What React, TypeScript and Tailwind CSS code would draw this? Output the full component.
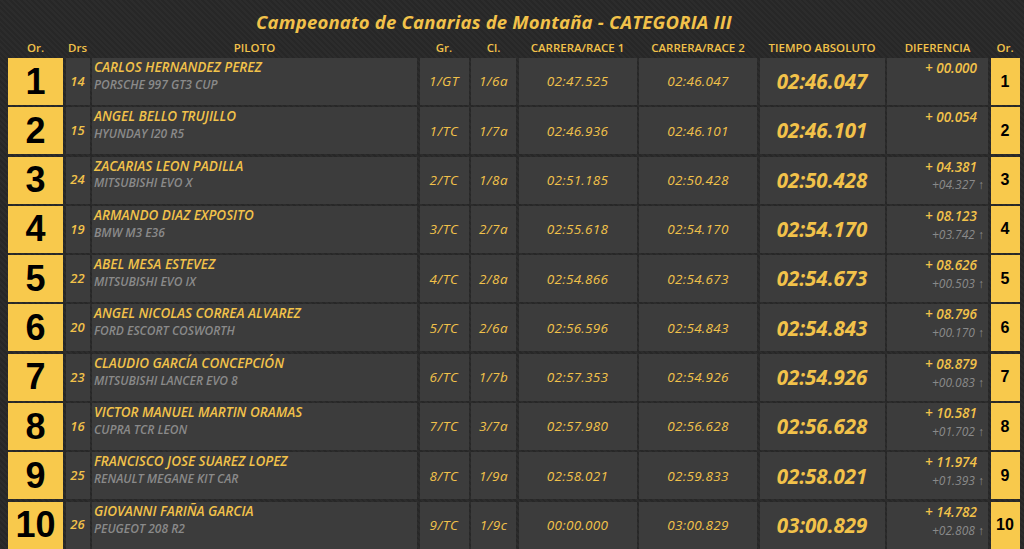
import React from "react";

type Row = {
  pos: number;
  drs: string;
  name: string;
  car: string;
  gr: string;
  cl: string;
  r1: string;
  r2: string;
  abs: string;
  diff: string;
  diff2: string;
};

const rows: Row[] = [
  { pos: 1, drs: "14", name: "CARLOS HERNANDEZ PEREZ", car: "PORSCHE 997 GT3 CUP", gr: "1/GT", cl: "1/6a", r1: "02:47.525", r2: "02:46.047", abs: "02:46.047", diff: "+ 00.000", diff2: "" },
  { pos: 2, drs: "15", name: "ANGEL BELLO TRUJILLO", car: "HYUNDAY I20 R5", gr: "1/TC", cl: "1/7a", r1: "02:46.936", r2: "02:46.101", abs: "02:46.101", diff: "+ 00.054", diff2: "" },
  { pos: 3, drs: "24", name: "ZACARIAS LEON PADILLA", car: "MITSUBISHI EVO X", gr: "2/TC", cl: "1/8a", r1: "02:51.185", r2: "02:50.428", abs: "02:50.428", diff: "+ 04.381", diff2: "+04.327" },
  { pos: 4, drs: "19", name: "ARMANDO DIAZ EXPOSITO", car: "BMW M3 E36", gr: "3/TC", cl: "2/7a", r1: "02:55.618", r2: "02:54.170", abs: "02:54.170", diff: "+ 08.123", diff2: "+03.742" },
  { pos: 5, drs: "22", name: "ABEL MESA ESTEVEZ", car: "MITSUBISHI EVO IX", gr: "4/TC", cl: "2/8a", r1: "02:54.866", r2: "02:54.673", abs: "02:54.673", diff: "+ 08.626", diff2: "+00.503" },
  { pos: 6, drs: "20", name: "ANGEL NICOLAS CORREA ALVAREZ", car: "FORD ESCORT COSWORTH", gr: "5/TC", cl: "2/6a", r1: "02:56.596", r2: "02:54.843", abs: "02:54.843", diff: "+ 08.796", diff2: "+00.170" },
  { pos: 7, drs: "23", name: "CLAUDIO GARCÍA CONCEPCIÓN", car: "MITSUBISHI LANCER EVO 8", gr: "6/TC", cl: "1/7b", r1: "02:57.353", r2: "02:54.926", abs: "02:54.926", diff: "+ 08.879", diff2: "+00.083" },
  { pos: 8, drs: "16", name: "VICTOR MANUEL MARTIN ORAMAS", car: "CUPRA TCR LEON", gr: "7/TC", cl: "3/7a", r1: "02:57.980", r2: "02:56.628", abs: "02:56.628", diff: "+ 10.581", diff2: "+01.702" },
  { pos: 9, drs: "25", name: "FRANCISCO JOSE SUAREZ LOPEZ", car: "RENAULT MEGANE KIT CAR", gr: "8/TC", cl: "1/9a", r1: "02:58.021", r2: "02:59.833", abs: "02:58.021", diff: "+ 11.974", diff2: "+01.393" },
  { pos: 10, drs: "26", name: "GIOVANNI FARIÑA GARCIA", car: "PEUGEOT 208 R2", gr: "9/TC", cl: "1/9c", r1: "00:00.000", r2: "03:00.829", abs: "03:00.829", diff: "+ 14.782", diff2: "+02.808" },
];

const grid =
  "grid grid-cols-[55px_24px_325px_49px_45px_118px_118px_125px_101px_29px] gap-x-[2.5px]";
const cell = "bg-[#3c3c3c]";
const font = { fontFamily: '"Open Sans", "Noto Sans", sans-serif' };

export default function App() {
  return (
    <div
      className="w-[1024px] h-[549px] overflow-hidden bg-[#2a2a2a] bg-[repeating-linear-gradient(45deg,#2c2c2c_0px,#2c2c2c_2px,#272727_2px,#272727_4px)] text-[#f2c24a]"
      style={font}
    >
      <div className="h-[38px] flex items-center justify-center pr-[36px] pt-[6px]">
        <h1 className="text-[18.5px] font-bold italic tracking-[0.2px]">
          Campeonato de Canarias de Montaña - CATEGORIA III
        </h1>
      </div>
      <div className={`${grid} pl-[8px] h-[20px] items-center text-[11.5px] font-semibold text-center`}>
        <div>Or.</div>
        <div>Drs</div>
        <div>PILOTO</div>
        <div>Gr.</div>
        <div>Cl.</div>
        <div>CARRERA/RACE 1</div>
        <div>CARRERA/RACE 2</div>
        <div>TIEMPO ABSOLUTO</div>
        <div>DIFERENCIA</div>
        <div>Or.</div>
      </div>
      <div className="flex flex-col gap-y-[2.3px] pl-[8px]">
        {rows.map((r) => (
          <div key={r.pos} className={`${grid} h-[47px]`}>
            <div
              className="bg-[#f8c94c] text-black flex items-center justify-center text-[36px] font-bold leading-none"
              style={{ fontFamily: '"Liberation Sans", Arial, sans-serif' }}
            >
              {r.pos}
            </div>
            <div className={`${cell} flex items-center justify-center text-[13px] font-semibold italic`}>
              {r.drs}
            </div>
            <div className={`${cell} pl-[2px] pt-[1px] italic leading-tight`}>
              <div className="text-[13.5px] font-semibold">{r.name}</div>
              <div className="text-[12px] font-semibold text-[#8a8a8a] mt-[1px]">{r.car}</div>
            </div>
            <div className={`${cell} flex items-center justify-center text-[13.5px] italic tracking-[0.5px]`}>{r.gr}</div>
            <div className={`${cell} flex items-center justify-center text-[13.5px] italic tracking-[0.5px]`}>{r.cl}</div>
            <div className={`${cell} flex items-center justify-center text-[13.5px] italic tracking-[0.3px]`}>{r.r1}</div>
            <div className={`${cell} flex items-center justify-center text-[13.5px] italic tracking-[0.3px]`}>{r.r2}</div>
            <div className={`${cell} flex items-center justify-center text-[20.5px] font-bold italic`}>{r.abs}</div>
            <div className={`${cell} flex flex-col items-end pt-[2px] italic leading-tight`}>
              <div className="text-[13.5px] font-semibold pr-[11px]">{r.diff}</div>
              {r.diff2 && (
                <div className="text-[12px] text-[#8a8a8a] pr-[4px] mt-[2px]">
                  {r.diff2} <span className="not-italic">↑</span>
                </div>
              )}
            </div>
            <div
              className="bg-[#f8c94c] text-black flex items-center justify-center text-[16px] font-bold leading-none"
              style={{ fontFamily: '"Liberation Sans", Arial, sans-serif' }}
            >
              {r.pos}
            </div>
          </div>
        ))}
      </div>
    </div>
  );
}
